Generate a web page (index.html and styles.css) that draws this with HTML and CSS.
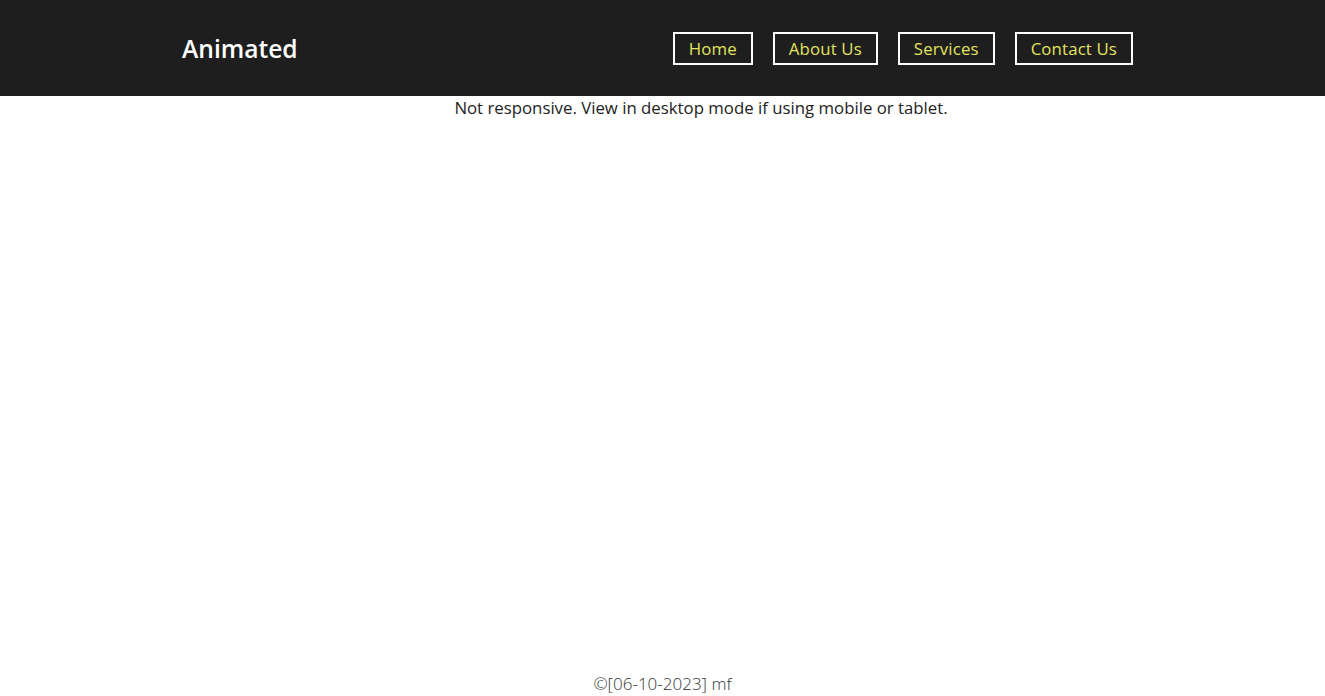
FILE: index.html
```html
<!DOCTYPE html>
<html lang="en">
<head>
<meta charset="utf-8">
<title>Animated</title>
<link rel="stylesheet" href="styles.css">
</head>
<body>
<header class="header">
  <div class="logo">Animated</div>
  <nav class="nav">
    <a class="nav-link" href="#">Home</a>
    <a class="nav-link" href="#">About Us</a>
    <a class="nav-link" href="#">Services</a>
    <a class="nav-link" href="#">Contact Us</a>
  </nav>
</header>
<main class="main">
  <p class="notice">Not responsive. View in desktop mode if using mobile or tablet.</p>
</main>
<footer class="footer">©[06-10-2023] mf</footer>
</body>
</html>
```
FILE: styles.css
```css
* { box-sizing: border-box; }
html, body { height: 100%; }
body {
  margin: 0;
  font-family: "Open Sans", "Noto Sans", sans-serif;
  background: #fff;
  display: flex;
  flex-direction: column;
}
.header {
  height: 96px;
  background: #1e1e1e;
  display: flex;
  align-items: center;
  justify-content: space-between;
  padding: 0 192px 0 182px;
  flex-shrink: 0;
}
.logo {
  color: #fff;
  font-size: 24.6px;
  font-weight: 600;
  letter-spacing: 0;
}
.nav {
  display: flex;
  gap: 20px;
}
.nav-link {
  color: #e3e35e;
  text-decoration: none;
  font-size: 16.8px;
  letter-spacing: 0.15px;
  line-height: 29px;
  border: 2px solid #fff;
  padding: 0 14px;
}
.main {
  flex: 1;
}
.notice {
  margin: 0;
  padding: 0 0 0 77px;
  text-align: center;
  font-size: 16.8px;
  font-weight: 500;
  color: #222;
  line-height: 24px;
}
.footer {
  text-align: center;
  font-size: 17px;
  font-weight: 300;
  color: #333;
  height: 24px;
  line-height: 24px;
}
```
